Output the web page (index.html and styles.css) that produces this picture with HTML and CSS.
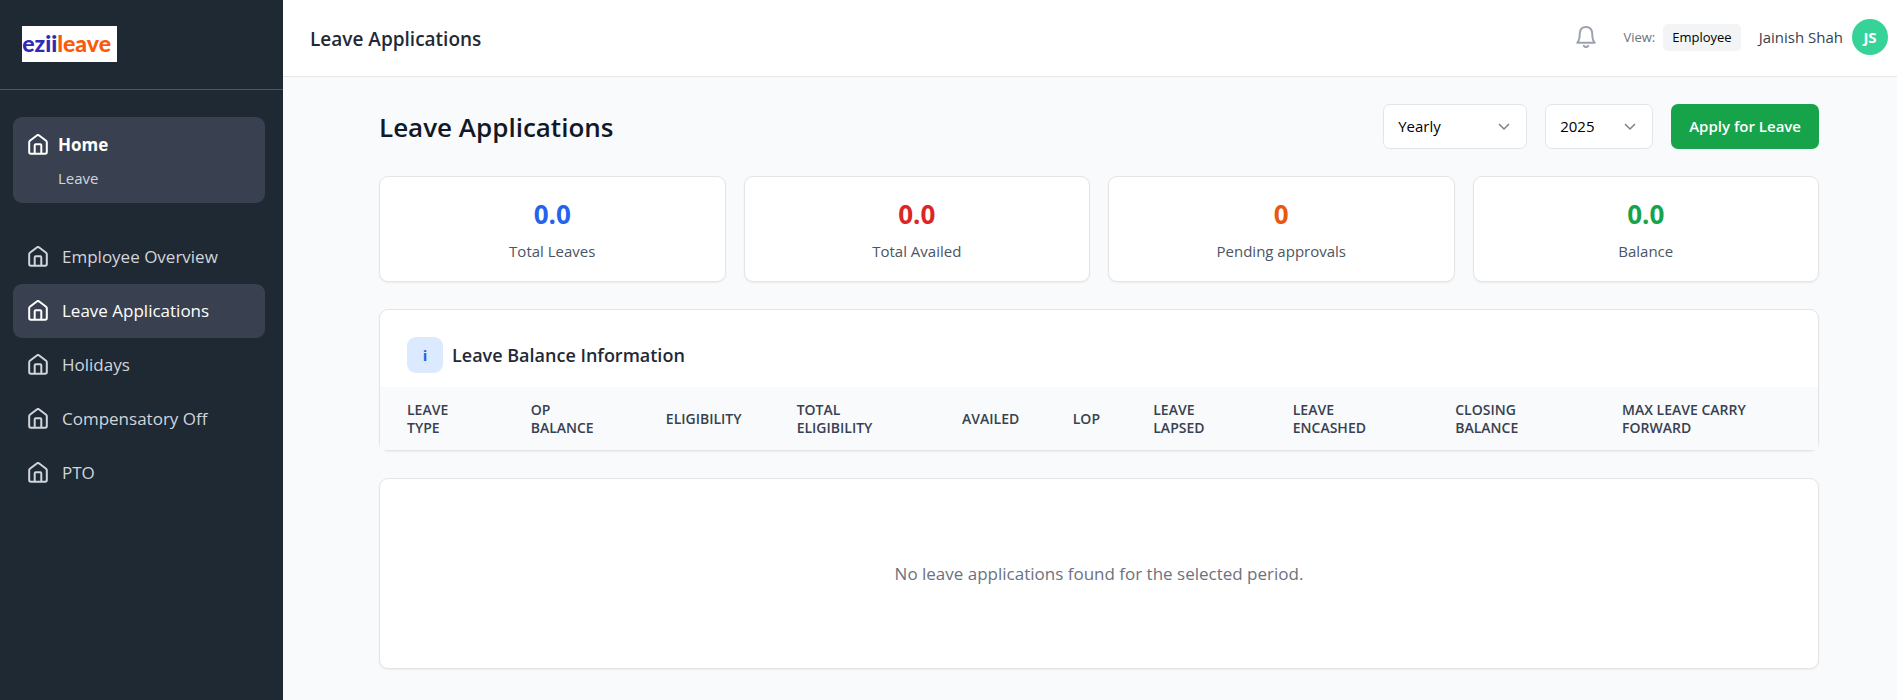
FILE: index.html
```html
<!DOCTYPE html>
<html lang="en">
<head>
<meta charset="utf-8">
<meta name="viewport" content="width=device-width, initial-scale=1">
<title>Leave Applications</title>
<link rel="stylesheet" href="styles.css">
</head>
<body>
<svg class="sprite" aria-hidden="true">
  <symbol id="home" viewBox="0 0 20 21">
    <path d="M1.2 18V8.2c0-.6.2-1 .7-1.4L8.800 1.500c.7-.6 1.700-.6 2.400 0l6.900 5.300c.5.4.7.800.7 1.400V18c0 1-.7 1.700-1.700 1.700H2.900c-1 0-1.700-.7-1.700-1.700z"/>
    <path d="M6.700 19.700v-8.500c0-.6.4-1 1-1h4.600c.6 0 1 .4 1 1v8.500"/>
  </symbol>
</svg>
<div class="app">
  <aside class="sidebar">
    <div class="brand">
      <a class="logo" href="#" aria-label="eziileave"><span class="logo-text"><span class="logo-ezii">ezii</span>leave</span></a>
    </div>
    <nav class="nav">
      <a class="home-card" href="#">
        <svg class="icon"><use href="#home"/></svg>
        <span class="home-title">Home</span>
        <span class="home-sub">Leave</span>
      </a>
      <a class="nav-item" href="#"><svg class="icon"><use href="#home"/></svg>Employee Overview</a>
      <a class="nav-item active" href="#" aria-current="page"><svg class="icon"><use href="#home"/></svg>Leave Applications</a>
      <a class="nav-item" href="#"><svg class="icon"><use href="#home"/></svg>Holidays</a>
      <a class="nav-item" href="#"><svg class="icon"><use href="#home"/></svg>Compensatory Off</a>
      <a class="nav-item" href="#"><svg class="icon"><use href="#home"/></svg>PTO</a>
    </nav>
  </aside>
  <div class="page">
    <header class="topbar">
      <div class="topbar-title">Leave Applications</div>
      <div class="topbar-right">
        <button class="bell" type="button" aria-label="Notifications">
          <svg width="20" height="22" viewBox="0 0 20 22"><path d="M1.300 16.700c1.400-1.300 1.900-2.700 2.200-5.200l.3-4.400C4.100 3.400 6.500 1 10 1s5.900 2.400 6.200 6.100l.3 4.400c.3 2.500.8 3.900 2.200 5.200z"/><path d="M7.800 19.800c.6.800 1.300 1.100 2.200 1.100s1.600-.3 2.200-1.100"/></svg>
        </button>
        <div class="view"><span class="view-label">View:</span><button class="role" type="button">Employee</button></div>
        <div class="user"><span>Jainish Shah</span><span class="avatar">JS</span></div>
      </div>
    </header>
    <div class="scroll">
      <main class="content">
        <div class="heading">
          <h1>Leave Applications</h1>
          <div class="actions">
            <select class="select period" aria-label="Period"><option>Yearly</option></select>
            <select class="select year" aria-label="Year"><option>2025</option></select>
            <button class="apply" type="button">Apply for Leave</button>
          </div>
        </div>
        <section class="stats">
          <div class="card stat"><div class="value blue">0.0</div><div class="label">Total Leaves</div></div>
          <div class="card stat"><div class="value red">0.0</div><div class="label">Total Availed</div></div>
          <div class="card stat"><div class="value orange">0</div><div class="label">Pending approvals</div></div>
          <div class="card stat"><div class="value green">0.0</div><div class="label">Balance</div></div>
        </section>
        <section class="card">
          <h2><span class="info">i</span>Leave Balance Information</h2>
          <table>
            <colgroup><col class="c1"><col class="c2"><col class="c3"><col class="c4"><col class="c5"><col class="c6"><col class="c7"><col class="c8"><col class="c9"><col></colgroup>
            <thead>
              <tr>
                <th scope="col">Leave<br>Type</th>
                <th scope="col">OP<br>Balance</th>
                <th scope="col">Eligibility</th>
                <th scope="col">Total<br>Eligibility</th>
                <th scope="col">Availed</th>
                <th scope="col">LOP</th>
                <th scope="col">Leave<br>Lapsed</th>
                <th scope="col">Leave<br>Encashed</th>
                <th scope="col">Closing<br>Balance</th>
                <th scope="col">Max Leave Carry<br>Forward</th>
              </tr>
            </thead>
          </table>
        </section>
        <section class="card empty"><p>No leave applications found for the selected period.</p></section>
      </main>
    </div>
  </div>
</div>
</body>
</html>
```
FILE: styles.css
```css
* { box-sizing: border-box; }
body {
  margin: 0;
  font-family: "Open Sans", "Noto Sans", sans-serif;
  font-size: 16px;
  line-height: 27px;
  color: #111827;
  background: #f9fafb;
}
h1, h2, p { margin: 0; }
a { color: inherit; text-decoration: none; }
button, select { font: inherit; color: inherit; }
button { border: 0; padding: 0; cursor: pointer; }
.sprite { display: none; }
.app { display: flex; min-height: 100vh; }

.sidebar { flex: none; width: 283px; background: #1f2933; color: #d1d5db; }
.brand { height: 90px; padding: 26px 22px; border-bottom: 1px solid #4b5563; }
.logo {
  display: flex;
  justify-content: flex-end;
  align-items: center;
  width: 95px;
  height: 36px;
  padding: 0 6px 2px 0;
  background: #fff;
  overflow: hidden;
}
.logo-text {
  font-family: Lato, "Open Sans", sans-serif;
  font-size: 23px;
  font-weight: 900;
  color: #f95a0b;
}
.logo-ezii { color: #3029b8; }
.nav { display: flex; flex-direction: column; padding: 27px 18px 27px 13px; }
.icon {
  flex: none;
  width: 20px;
  height: 21px;
  fill: none;
  stroke: currentColor;
  stroke-width: 2;
  stroke-linejoin: round;
}
.home-card {
  display: grid;
  grid-template-columns: 20px 1fr;
  column-gap: 10px;
  row-gap: 7px;
  align-items: center;
  margin-bottom: 27px;
  padding: 14px 15px 11px;
  border-radius: 9px;
  background: #394150;
}
.home-title { font-size: 17px; font-weight: 700; color: #fff; }
.home-card .icon { color: #fff; }
.home-sub { grid-column: 2; font-size: 15px; }
.nav-item {
  display: flex;
  align-items: center;
  gap: 14px;
  height: 54px;
  padding: 0 15px 1px;
  border-radius: 9px;
  font-size: 17px;
}
.nav-item.active { background: #394150; color: #fff; }

.page { flex: 1; min-width: 0; }
.topbar {
  display: flex;
  align-items: center;
  justify-content: space-between;
  height: 77px;
  padding: 0 9px 0 27px;
  border-bottom: 1px solid #e5e7eb;
  background: #fff;
}
.topbar-title { padding-top: 2px; font-size: 19px; font-weight: 600; color: #1f2937; }
.topbar-right { display: flex; align-items: center; padding-bottom: 2px; }
.bell { display: flex; margin-right: 27px; background: none; }
.bell svg { fill: none; stroke: #9ca3af; stroke-width: 2; stroke-linejoin: round; stroke-linecap: round; }
.view { display: flex; align-items: center; gap: 8px; margin-right: 18px; font-size: 13px; }
.view-label { color: #6b7280; }
.role { height: 27px; padding: 0 9px; border-radius: 5px; background: #f3f4f6; color: #000; }
.user { display: flex; align-items: center; gap: 9px; font-size: 15px; color: #374151; }
.avatar {
  width: 36px;
  height: 36px;
  border-radius: 50%;
  background: #36d399;
  color: #fff;
  font-weight: 700;
  line-height: 36px;
  text-align: center;
}

.scroll { padding-left: 18px; }
.content {
  display: flex;
  flex-direction: column;
  gap: 27px;
  max-width: 1494px;
  margin: 0 auto;
  padding: 27px;
}
.heading { display: flex; align-items: center; justify-content: space-between; }
h1 { font-size: 26px; line-height: 36px; font-weight: 600; }
.actions { display: flex; gap: 18px; }
.select {
  height: 45px;
  padding: 0 14px;
  border: 1px solid #e5e5e5;
  border-radius: 7px;
  appearance: none;
  background: #fff url("data:image/svg+xml,%3Csvg xmlns='http://www.w3.org/2000/svg' width='12' height='8' viewBox='0 0 12 8' fill='none' stroke='%23808080' stroke-width='1.500'%3E%3Cpath d='M1 1l5 5 5-5'/%3E%3C/svg%3E") no-repeat right 16px center;
  font-size: 15px;
  color: #000;
}
.period { width: 144px; }
.year { width: 108px; }
.apply {
  height: 45px;
  padding: 0 18px;
  border-radius: 7px;
  background: #16a34a;
  color: #fff;
  font-size: 15px;
  font-weight: 600;
}
.card {
  border: 1px solid #e5e5e5;
  border-radius: 9px;
  background: #fff;
  box-shadow: 0 1px 2px rgba(0, 0, 0, 0.06);
}
.stats { display: grid; grid-template-columns: repeat(4, 1fr); gap: 18px; }
.stat { padding: 18px 18px 16px; text-align: center; }
.value { margin-bottom: 5px; font-size: 26px; line-height: 38px; font-weight: 700; }
.label { font-size: 15px; color: #4b5563; }
.blue { color: #2563eb; }
.red { color: #dc2626; }
.orange { color: #ea580c; }
.green { color: #16a34a; }
h2 {
  display: flex;
  align-items: center;
  gap: 9px;
  padding: 27px 27px 14px;
  font-size: 18px;
  font-weight: 600;
  color: #1f2937;
}
.info {
  width: 36px;
  height: 36px;
  border-radius: 9px;
  background: #dbeafe;
  color: #2563eb;
  font-size: 15px;
  font-weight: 700;
  line-height: 36px;
  text-align: center;
}
table { width: 100%; border-collapse: collapse; table-layout: fixed; background: #f9fafb; }
th {
  padding: 14px 0 13px 27px;
  font-size: 14px;
  line-height: 18px;
  font-weight: 600;
  text-align: left;
  text-transform: uppercase;
  white-space: nowrap;
  color: #374151;
}
.c1 { width: 8.600%; }
.c2 { width: 9.400%; }
.c3 { width: 9.100%; }
.c4 { width: 11.500%; }
.c5 { width: 7.700%; }
.c6 { width: 5.600%; }
.c7 { width: 9.700%; }
.c8 { width: 11.300%; }
.c9 { width: 11.600%; }
.empty { padding: 81px 27px; text-align: center; font-size: 17px; color: #6b7280; }
```
